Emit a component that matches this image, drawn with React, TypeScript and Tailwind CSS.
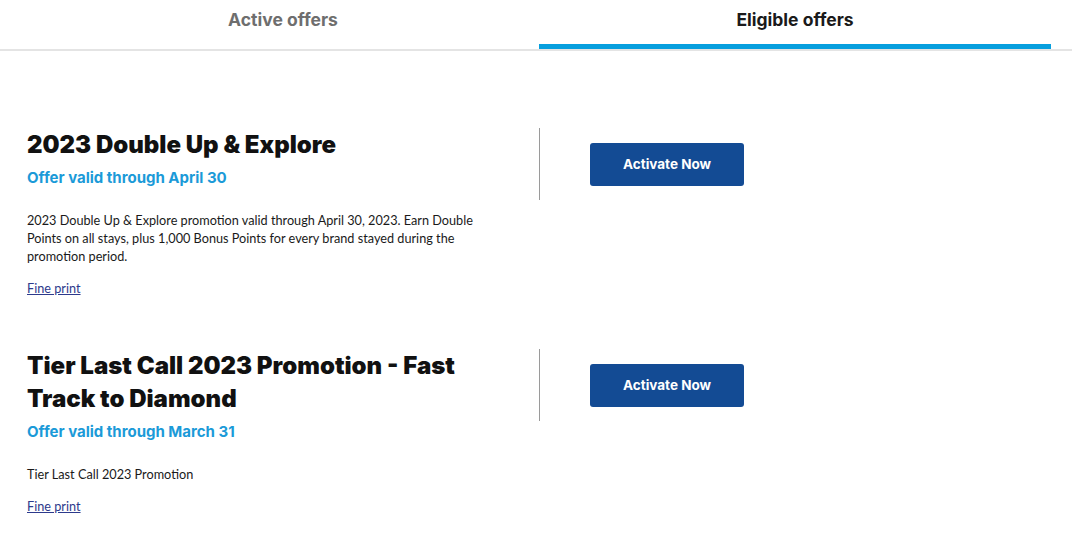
import React from 'react';

type Offer = {
  title: string;
  valid: string;
  desc: string;
};

const OFFERS: Offer[] = [
  {
    title: '2023 Double Up & Explore',
    valid: 'Offer valid through April 30',
    desc: '2023 Double Up & Explore promotion valid through April 30, 2023. Earn Double Points on all stays, plus 1,000 Bonus Points for every brand stayed during the promotion period.',
  },
  {
    title: 'Tier Last Call 2023 Promotion - Fast Track to Diamond',
    valid: 'Offer valid through March 31',
    desc: 'Tier Last Call 2023 Promotion',
  },
];

const heading = { fontFamily: 'Inter, "Noto Sans", sans-serif' };
const body = { fontFamily: 'Lato, "Liberation Sans", sans-serif' };

function OfferRow({ offer, first }: { offer: Offer; first: boolean }) {
  return (
    <div className={`flex items-start ${first ? '' : 'mt-[50px]'}`}>
      <div className="w-[512px] pr-[30px]">
        <h2
          className="text-[24px] font-black leading-[33px] text-[#111]"
          style={heading}
        >
          {offer.title}
        </h2>
        <p
          className="mt-[5px] text-[15px] font-bold leading-[24px] text-[#1b9ad8]"
          style={heading}
        >
          {offer.valid}
        </p>
        <p className="mt-[21px] text-[12.7px] leading-[18px] text-[#1a1a1a]" style={body}>
          {offer.desc}
        </p>
        <a
          href="#"
          className="mt-[14px] inline-block text-[12.7px] leading-[18px] text-[#2d3a8c] underline"
          style={body}
        >
          Fine print
        </a>
      </div>
      <div className="h-[72px] w-px bg-[#9a9a9a]" />
      <button
        className="ml-[50px] mt-[15px] h-[43px] w-[154px] rounded-[3px] bg-[#134b94] text-[13.5px] font-bold text-white"
        style={heading}
      >
        Activate Now
      </button>
    </div>
  );
}

export default function App() {
  return (
    <div className="min-h-screen bg-white">
      <div className="border-b-2 border-[#e4e4e4]">
        <div className="ml-[27px] mr-[21px] flex">
          <div className="flex h-[49px] flex-1 justify-center pt-[9px]">
            <span
              className="text-[17.5px] font-bold leading-[22px] text-[#6e6e6e]"
              style={heading}
            >
              Active offers
            </span>
          </div>
          <div className="flex h-[49px] flex-1 flex-col items-center justify-between border-b-[5px] border-[#079fde] pt-[9px]">
            <span
              className="text-[17.5px] font-bold leading-[22px] text-[#1a1a1a]"
              style={heading}
            >
              Eligible offers
            </span>
          </div>
        </div>
      </div>
      <div className="px-[27px] pt-[77px]">
        {OFFERS.map((o, i) => (
          <OfferRow key={o.title} offer={o} first={i === 0} />
        ))}
      </div>
    </div>
  );
}
